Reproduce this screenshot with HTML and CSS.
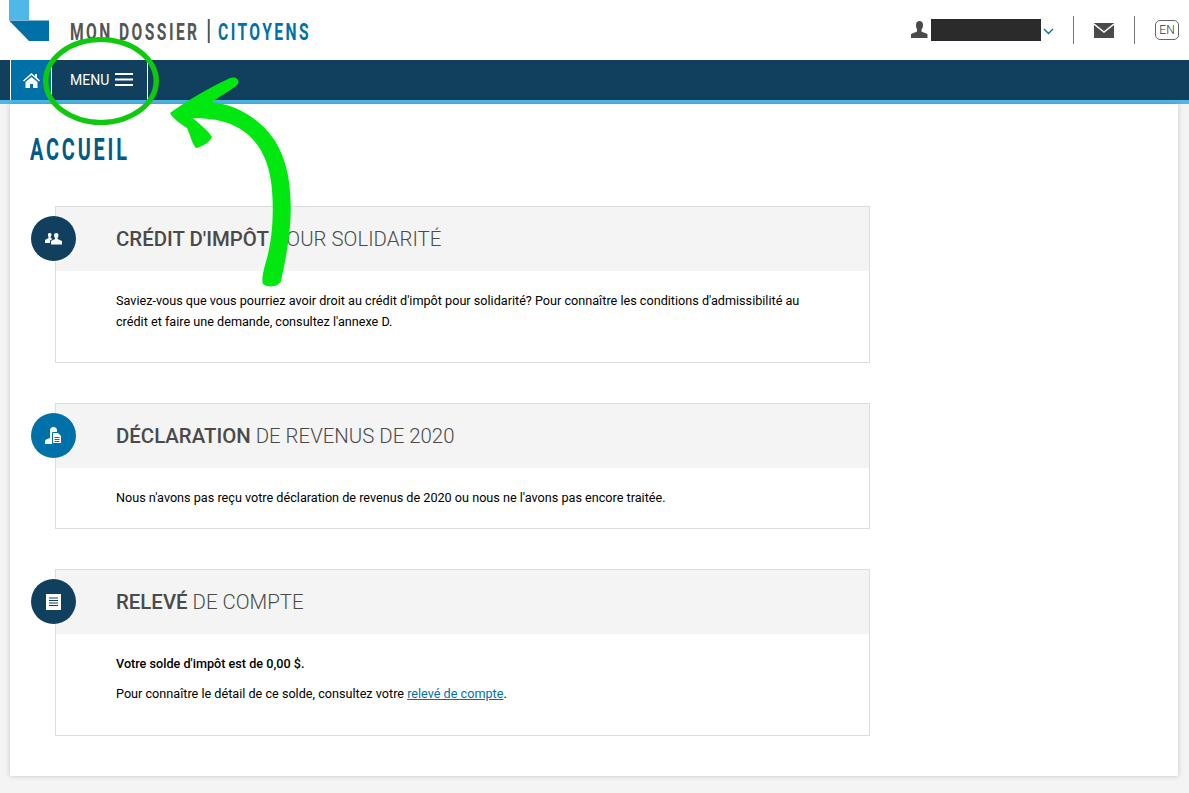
FILE: index.html
```html
<!DOCTYPE html>
<html lang="fr">
<head>
<meta charset="utf-8">
<title>Mon dossier | Citoyens</title>
<link rel="stylesheet" href="styles.css">
</head>
<body>
<header class="top">
  <div class="brand">
    <svg class="logo" width="50" height="41" viewBox="0 0 50 41"><path class="logo-light" d="M9 0h20v20H9z"/><path class="logo-dark" d="M9 20.500h40v20.500H29z"/></svg>
    <div class="brand-name"><span class="brand-inner">MON DOSSIER <span class="brand-sep"></span> <span class="brand-accent">CITOYENS</span></span></div>
  </div>
  <div class="tools">
    <svg class="user-icon" width="17" height="17" viewBox="0 0 17 17"><path d="M5 4c0-3 1.500-4 3.500-4S12 1 12 4c0 2-.7 3.500-1.500 4.500v2c1 1 5.500 1.500 6 3V17H0v-3.500c.5-1.500 5-2 6-3v-2C5.700 7.500 5 6 5 4z"/></svg>
    <span class="redacted"></span>
    <svg class="chevron" width="11" height="7" viewBox="0 0 11 7"><path d="M1 1l4.500 4.500L10 1"/></svg>
    <span class="divider"></span>
    <svg class="mail" width="20" height="15" viewBox="0 0 20 15"><path class="mail-body" d="M0 0h20v15H0z"/><path class="mail-flap" d="M0 1l10 8 10-8"/></svg>
    <span class="divider"></span>
    <span class="lang">EN</span>
  </div>
</header>
<nav class="nav">
  <a class="nav-home"><svg width="17" height="15" viewBox="0 0 17 15"><path d="M8.500 0l3.500 3V1h2v3.700L17 7.500l-1 1-7.500-6.500L1 8.500l-1-1zM2.500 9l6-5 6 5v6H10v-4H7v4H2.500z"/></svg></a>
  <a class="nav-menu">MENU <svg width="18" height="13" viewBox="0 0 18 13"><path d="M0 1h18M0 6.500h18M0 12h18"/></svg></a>
</nav>
<main class="panel">
  <h1 class="page-title"><span class="page-title-inner">ACCUEIL</span></h1>
  <section class="card">
    <span class="badge badge-navy"><svg width="17" height="12" viewBox="0 0 17 12"><path d="M3 1.500C3 .5 3.700 0 4.700 0S6.500.5 6.500 1.500c0 1-.4 2-.8 2.500v1L7.500 6 5 7.500V10H0V7l3.500-2V4C3 3.500 3 2.500 3 1.500zM9 2c0-1.200 1-2 2.200-2s2.300.8 2.300 2c0 1.200-.5 2.300-1 3v1l4.500 2v3.500H6V8l4-2V5C9.500 4.300 9 3.200 9 2z"/></svg></span>
    <div class="card-head"><h2 class="card-title"><b>CRÉDIT D'IMPÔT</b> POUR SOLIDARITÉ</h2></div>
    <div class="card-body card-body-credit">
      <p>Saviez-vous que vous pourriez avoir droit au crédit d'impôt pour solidarité? Pour connaître les conditions d'admissibilité au crédit et faire une demande, consultez l'annexe D.</p>
    </div>
  </section>
  <section class="card">
    <span class="badge badge-blue"><svg width="17" height="17" viewBox="0 0 17 17"><path class="fill-white" d="M5 3.500C5 1.300 6.300 0 8.500 0S12 1.300 12 3.500c0 1.500-.5 2.700-1.200 3.500v2H7v8H0v-3l1-1.500 4-1.500V7C5.400 6 5 5 5 3.500z"/><path class="doc" d="M7.500 5.500H13l3.500 3.500v7.500h-9z"/><path class="doc-lines" d="M9.500 10.500h5M9.500 12.500h5M9.500 14.500h5"/></svg></span>
    <div class="card-head"><h2 class="card-title"><b>DÉCLARATION</b> DE REVENUS DE 2020</h2></div>
    <div class="card-body card-body-decl">
      <p>Nous n'avons pas reçu votre déclaration de revenus de 2020 ou nous ne l'avons pas encore traitée.</p>
    </div>
  </section>
  <section class="card">
    <span class="badge badge-navy"><svg width="15" height="16" viewBox="0 0 15 16"><path class="fill-white" d="M0 0h15v16H0z"/><path class="sheet-lines" d="M3 4h9M3 6.500h9M3 9h9M3 11.500h9"/></svg></span>
    <div class="card-head"><h2 class="card-title"><b>RELEVÉ</b> DE COMPTE</h2></div>
    <div class="card-body card-body-account">
      <p class="solde">Votre solde d'impôt est de 0,00 $.</p>
      <p>Pour connaître le détail de ce solde, consultez votre <a class="link">relevé de compte</a>.</p>
    </div>
  </section>
</main>
<svg class="annotation" width="1189" height="793" viewBox="0 0 1189 793">
  <path class="ring" d="M43 81a58 44 0 1 0 116 0a58 44 0 1 0-116 0zM48.500 81a52.500 39 0 1 1 105 0a52.500 39 0 1 1-105 0z"/>
  <path class="arrow" d="M170 113C185 102 210 87 230 78C236 76 240 80 238 84C232 90 220 96 212 102C228 104 244 110 258 122C276 136 286 158 289 182C292 205 291 225 287 250C285 262 283 272 281 281C279 287 267 288 263 284C261 280 264 268 267 258C272 240 274 215 272 190C270 165 262 146 246 133C234 123 216 118 193 118C199 124 208 130 212 137C210 142 202 147 196 148C192 144 190 134 187 128C181 124 173 119 170 113Z"/>
</svg>
</body>
</html>
```
FILE: styles.css
```css
* { box-sizing: border-box; }
html, body { margin: 0; padding: 0; }
body {
  width: 1189px;
  height: 793px;
  overflow: hidden;
  position: relative;
  background: #f4f4f4;
  font-family: Roboto, "Liberation Sans", sans-serif;
  color: #000;
}
.top {
  height: 60px;
  background: #fff;
  display: flex;
  justify-content: space-between;
  padding-right: 10px;
}
.brand { display: flex; align-items: flex-start; }
.logo { display: block; flex: none; }
.logo-light { fill: #4fb8e8; }
.logo-dark { fill: #0070a8; }
.brand-name { width: 260px; margin: 17px 0 0 20px; }
.brand-inner {
  display: inline-block;
  white-space: nowrap;
  font-size: 24px;
  line-height: 30px;
  font-weight: 700;
  letter-spacing: 3.750px;
  color: #555;
  transform: scaleX(.65);
  transform-origin: left center;
}
.brand-sep { display: inline-block; width: 3px; height: 24px; background: #555; vertical-align: -3px; margin: 0 3px; }
.brand-accent { color: #0070a8; }
.tools { display: flex; align-items: center; height: 60px; }
.user-icon { fill: #4a4a4a; margin: 0 3px 2px 0; }
.redacted { width: 110px; height: 22px; background: #2b2b2b; }
.chevron { fill: none; stroke: #0070a8; stroke-width: 1.300; margin: 2px 0 0 2px; }
.divider { width: 1px; height: 28px; background: #777; margin: 0 0 0 19px; }
.mail { margin-left: 20px; }
.mail + .divider { margin-left: 20px; }
.mail-body { fill: #4a4a4a; }
.mail-flap { fill: none; stroke: #fff; stroke-width: 1.500; }
.lang {
  margin-left: 20px;
  width: 24px;
  height: 20px;
  border: 1px solid #666;
  border-radius: 5px;
  font-size: 12px;
  font-weight: 300;
  color: #333;
  display: flex;
  align-items: center;
  justify-content: center;
}
.nav {
  height: 44px;
  background: #10405e;
  border-bottom: 4px solid #4fb8e8;
  display: flex;
  padding-left: 10px;
}
.nav-home {
  width: 42px;
  background: #0070a8;
  border-left: 1px solid #fff;
  border-right: 1px solid #fff;
  display: flex;
  align-items: center;
  justify-content: center;
}
.nav-home svg { fill: #fff; }
.nav-menu {
  width: 96px;
  border-right: 1px solid #fff;
  color: #fff;
  font-size: 14px;
  font-weight: 400;
  display: flex;
  align-items: center;
  gap: 6px;
  padding: 0 0 0 18px;
}
.nav-menu svg { fill: none; stroke: #fff; stroke-width: 2; margin-bottom: 2px; }
.panel {
  margin: 0 10px;
  width: 1168px;
  height: 672px;
  background: #fff;
  box-shadow: 0 0 5px rgba(0,0,0,.2);
  padding: 26px 20px 0 21px;
}
.page-title { margin: 0 0 45px -1px; height: 31px; }
.page-title-inner {
  display: inline-block;
  white-space: nowrap;
  font-size: 32px;
  line-height: 31px;
  font-weight: 700;
  letter-spacing: 4.600px;
  color: #005a8a;
  transform: scaleX(.62);
  transform-origin: left center;
}
.card {
  position: relative;
  width: 815px;
  margin: 0 0 40px 24px;
  border: 1px solid #ddd;
}
.badge {
  position: absolute;
  left: -25px;
  top: 9px;
  width: 45px;
  height: 45px;
  border-radius: 50%;
  display: flex;
  align-items: center;
  justify-content: center;
}
.badge svg { fill: #fff; }
.badge-navy { background: #10405e; }
.badge-blue { background: #0070a8; }
.fill-white { fill: #fff; }
.doc { fill: #fff; stroke: #0070a8; stroke-width: 1; }
.doc-lines { fill: none; stroke: #0070a8; stroke-width: 1; }
.sheet-lines { fill: none; stroke: #10405e; stroke-width: 1; }
.card-head {
  height: 64px;
  background: #f4f4f4;
  padding-left: 60px;
  display: flex;
  align-items: center;
}
.card-title {
  margin: 0;
  font-size: 20.400px;
  line-height: 24px;
  font-weight: 300;
  color: #4a4a4a;
}
.card-title b { font-weight: 500; }
.card-body {
  padding: 0 60px;
  font-size: 12.650px;
  line-height: 21px;
}
.card-body p { margin: 0; }
.card-body-credit { padding-top: 19px; height: 91px; }
.card-body-decl { padding-top: 19px; height: 60px; }
.card-body-account { padding-top: 19px; height: 101px; }
.solde { font-weight: 500; margin-bottom: 9px !important; }
.link { color: #0070a8; text-decoration: underline; }
.annotation { position: absolute; left: 0; top: 0; pointer-events: none; }
.ring { fill: #0ec90e; fill-rule: evenodd; }
.arrow { fill: #00e810; }
```
